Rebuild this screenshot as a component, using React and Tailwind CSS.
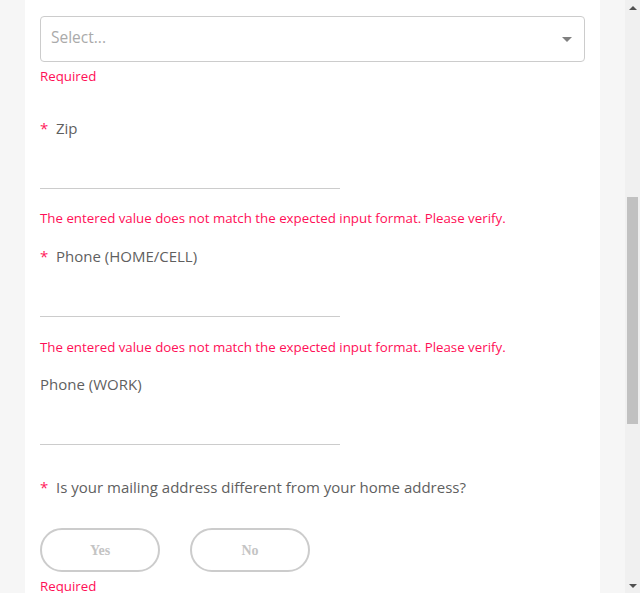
const Label = ({ required, children }) => (
  <div className="flex items-center h-[20px] text-[15px] text-[#5f5f5f]">
    {required && <span className="text-[#ff1c5c] w-[16px] text-[15px]">*</span>}
    <span>{children}</span>
  </div>
);

const Underline = () => <div className="w-[300px] h-[51px] border-b border-[#cccccc]" />;

const Err = ({ children }) => (
  <div className="text-[13.3px] text-[#ff0f57] leading-[18px]">{children}</div>
);

const App = () => {
  return (
    <div
      className="flex w-[640px] h-[593px] overflow-hidden bg-[#f6f6f6]"
      style={{ fontFamily: "'Open Sans', Lato, sans-serif" }}
    >
      <div className="w-[575px] ml-[25px] bg-white px-[15px] pt-[16px]">
        {/* select */}
        <div className="h-[46px] w-[545px] border border-[#cccccc] rounded-[4px] flex items-center justify-between pl-[10px] pr-[12px]">
          <span className="text-[15.5px] text-[#aaaaaa] pb-[3px]">Select...</span>
          <span className="w-0 h-0 border-l-[5px] border-r-[5px] border-t-[5px] border-l-transparent border-r-transparent border-t-[#808080]" />
        </div>
        <div className="mt-[5px]">
          <Err>Required</Err>
        </div>

        <div className="mt-[33px]">
          <Label required>Zip</Label>
        </div>
        <Underline />
        <div className="mt-[20px]">
          <Err>The entered value does not match the expected input format. Please verify.</Err>
        </div>

        <div className="mt-[19px]">
          <Label required>Phone (HOME/CELL)</Label>
        </div>
        <Underline />
        <div className="mt-[21px]">
          <Err>The entered value does not match the expected input format. Please verify.</Err>
        </div>

        <div className="mt-[18px]">
          <Label>Phone (WORK)</Label>
        </div>
        <Underline />

        <div className="mt-[32px]">
          <Label required>Is your mailing address different from your home address?</Label>
        </div>

        <div className="flex gap-[30px] mt-[31px]">
          {["Yes", "No"].map((t) => (
            <button
              key={t}
              className="w-[120px] h-[44px] rounded-full border-2 border-[#cccccc] text-[#c4c4c4] text-[14px] font-bold bg-white"
              style={{ fontFamily: "'Liberation Serif', serif" }}
            >
              {t}
            </button>
          ))}
        </div>
        <div className="mt-[5px]">
          <Err>Required</Err>
        </div>
      </div>

      <div className="w-[25px]" />

      {/* scrollbar */}
      <div className="w-[15px] bg-[#f0f0f0] flex flex-col items-center">
        <div className="h-[15px] flex items-center justify-center">
          <span className="w-0 h-0 border-l-[4px] border-r-[4px] border-b-[4px] border-l-transparent border-r-transparent border-b-[#505050]" />
        </div>
        <div className="h-[182px]" />
        <div className="w-[11px] h-[227px] bg-[#c1c1c1]" />
        <div className="flex-1" />
        <div className="h-[15px] flex items-center justify-center">
          <span className="w-0 h-0 border-l-[4px] border-r-[4px] border-t-[4px] border-l-transparent border-r-transparent border-t-[#505050]" />
        </div>
      </div>
    </div>
  );
};

export default App;
